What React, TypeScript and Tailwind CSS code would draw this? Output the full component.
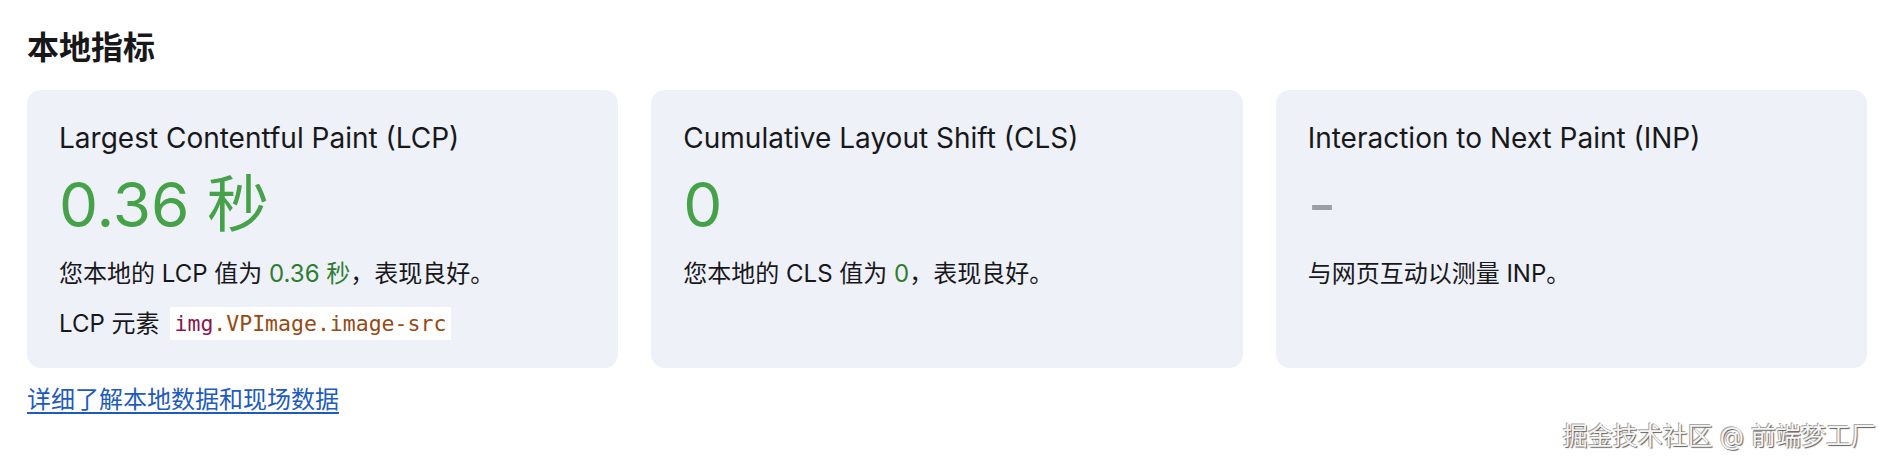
const sans = "font-['Inter','Noto_Sans_CJK_SC',sans-serif]";

type Metric = {
  title: string;
  value: string;
  muted?: boolean;
  note: React.ReactNode;
  element?: { tag: string; rest: string };
};

const metrics: Metric[] = [
  {
    title: "Largest Contentful Paint (LCP)",
    value: "0.36 秒",
    note: (
      <>
        您本地的 LCP 值为 <span className="text-[#2e7d32]">0.36 秒</span>，表现良好。
      </>
    ),
    element: { tag: "img", rest: ".VPImage.image-src" },
  },
  {
    title: "Cumulative Layout Shift (CLS)",
    value: "0",
    note: (
      <>
        您本地的 CLS 值为 <span className="text-[#2e7d32]">0</span>，表现良好。
      </>
    ),
  },
  {
    title: "Interaction to Next Paint (INP)",
    value: "-",
    muted: true,
    note: <>与网页互动以测量 INP。</>,
  },
];

const MetricCard = ({ m }: { m: Metric }) => (
  <div className="rounded-[14px] bg-[#eef1f8] px-[32px] pt-[30px] pb-[28px]">
    <h3 className="text-[28px] leading-[36px] text-[#18181b]">{m.title}</h3>
    <div
      className={
        "mt-[18px] text-[62px] leading-[61px] " +
        (m.muted ? "text-[#9aa0a6]" : "text-[#45a249]")
      }
    >
      {m.value}
    </div>
    <p className="mt-[23px] text-[24px] leading-[32px] text-[#18181b]">{m.note}</p>
    {m.element && (
      <div className="mt-[17px] flex items-center text-[24px] leading-[32px] text-[#18181b]">
        <span>LCP 元素</span>
        <code className="ml-[10px] bg-white px-[5px] py-[1px] font-['DejaVu_Sans_Mono',monospace] text-[21.5px] leading-[31px]">
          <span className="text-[#8a1550]">{m.element.tag}</span>
          <span className="text-[#964a14]">{m.element.rest}</span>
        </code>
      </div>
    )}
  </div>
);

export default function App() {
  return (
    <div className={"relative h-[468px] w-full bg-white px-[27px] pt-[28px] " + sans}>
      <h2 className="text-[32px] leading-[40px] font-semibold text-[#18181b]">本地指标</h2>
      <div className="mt-[22px] grid grid-cols-3 gap-[33px]">
        {metrics.map((m) => (
          <MetricCard key={m.title} m={m} />
        ))}
      </div>
      <a href="#" className="mt-[16px] inline-block text-[24px] leading-[32px] text-[#1d5bbf] underline underline-offset-[4px]">
        详细了解本地数据和现场数据
      </a>
      <div className="absolute right-[18px] bottom-[16px] text-[25px] leading-[32px] text-[#f4f4f4] [text-shadow:1px_1px_1px_#5e5e5e,-1px_-1px_0_#a8a8a8]">
        掘金技术社区 @ 前端梦工厂
      </div>
    </div>
  );
}
